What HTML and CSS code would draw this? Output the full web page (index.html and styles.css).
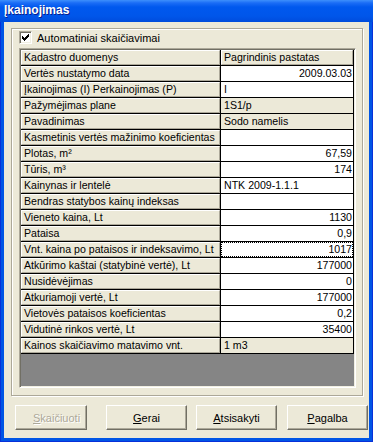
FILE: index.html
```html
<!DOCTYPE html>
<html lang="lt">
<head>
    <meta charset="UTF-8">
    <meta name="viewport" content="width=device-width, initial-scale=1.0">
    <title>Įkainojimas</title>
    <link rel="stylesheet" href="styles.css">
</head>
<body>
    <div class="window">
        <div class="titlebar">Įkainojimas</div>
        <div class="client">
            <div class="group">
                <div class="check">
                    <span class="check-box">
                        <svg width="7" height="7" viewBox="0 0 7 7"><path d="M0 2h1v1h1v1h1V3h1V2h1V1h1V0h1v3H6v1H5v1H4v1H3v1H2V6H1V5H0z" fill="#000"/></svg>
                    </span>
                    <span>Automatiniai skaičiavimai</span>
                </div>
                <div class="grid">
                    <div class="rows">
                        <div class="cell fixed">Kadastro duomenys</div>
                        <div class="cell fixed">Pagrindinis pastatas</div>

                        <div class="cell fixed">Vertės nustatymo data</div>
                        <div class="cell value num">2009.03.03</div>

                        <div class="cell fixed">Įkainojimas (I) Perkainojimas (P)</div>
                        <div class="cell value">I</div>

                        <div class="cell fixed">Pažymėjimas plane</div>
                        <div class="cell value ro">1S1/p</div>

                        <div class="cell fixed">Pavadinimas</div>
                        <div class="cell value ro">Sodo namelis</div>

                        <div class="cell fixed">Kasmetinis vertės mažinimo koeficientas</div>
                        <div class="cell value"></div>

                        <div class="cell fixed">Plotas, m²</div>
                        <div class="cell value num">67,59</div>

                        <div class="cell fixed">Tūris, m³</div>
                        <div class="cell value num">174</div>

                        <div class="cell fixed">Kainynas ir lentelė</div>
                        <div class="cell value">NTK 2009-1.1.1</div>

                        <div class="cell fixed">Bendras statybos kainų indeksas</div>
                        <div class="cell value"></div>

                        <div class="cell fixed">Vieneto kaina, Lt</div>
                        <div class="cell value num">1130</div>

                        <div class="cell fixed">Pataisa</div>
                        <div class="cell value num">0,9</div>

                        <div class="cell fixed">Vnt. kaina po pataisos ir indeksavimo, Lt</div>
                        <div class="cell value num focus">1017</div>

                        <div class="cell fixed">Atkūrimo kaštai (statybinė vertė), Lt</div>
                        <div class="cell value num">177000</div>

                        <div class="cell fixed">Nusidėvėjimas</div>
                        <div class="cell value num">0</div>

                        <div class="cell fixed">Atkuriamoji vertė, Lt</div>
                        <div class="cell value num">177000</div>

                        <div class="cell fixed">Vietovės pataisos koeficientas</div>
                        <div class="cell value num">0,2</div>

                        <div class="cell fixed">Vidutinė rinkos vertė, Lt</div>
                        <div class="cell value num">35400</div>

                        <div class="cell fixed">Kainos skaičiavimo matavimo vnt.</div>
                        <div class="cell value ro">1 m3</div>
                    </div>
                </div>
            </div>
            <div class="buttons">
                <button class="btn btn-calc" disabled><u>S</u>kaičiuoti</button>
                <button class="btn btn-ok"><u>G</u>erai</button>
                <button class="btn"><u>A</u>tsisakyti</button>
                <button class="btn btn-help"><u>P</u>agalba</button>
            </div>
        </div>
    </div>
</body>
</html>
```

FILE: styles.css
```css
* {
    margin: 0;
    padding: 0;
    box-sizing: border-box;
}
body {
    background: #fff;
    font-family: "Liberation Sans", Arial, sans-serif;
    font-size: 10.6px;
    color: #000;
}
.window {
    width: 373px;
    height: 442px;
    display: flex;
    flex-direction: column;
    padding: 0 4px 4px;
    background: #0055e5;
    box-shadow: inset 1px 0 #0831d9, inset -1px 0 #0831d9, inset 0 -1px #0831d9;
}
.titlebar {
    height: 22px;
    margin: 0 -4px;
    padding-left: 4px;
    line-height: 21px;
    font-size: 12px;
    font-weight: bold;
    color: #fff;
    text-shadow: 1px 1px #0a1e8c;
    background: linear-gradient(#3d8ffc 0, #1a6cf6 3px, #0058ee 7px, #0056ea 16px, #004cdc 22px);
}
.client {
    flex: 1;
    background: #ece9d8;
    padding: 6px 0 0 7px;
}
/* group frame */
.group {
    width: 352px;
    height: 368px;
    border: 1px solid #aca899;
    box-shadow: inset 1px 1px #fff, 1px 1px #fff;
    padding: 2px 0 0 7px;
}
.check {
    display: flex;
    align-items: center;
    height: 13px;
    margin-bottom: 4px;
    font-size: 11px;
}
.check-box {
    width: 13px;
    height: 13px;
    margin-right: 5px;
    background: #fff;
    border-top: 1px solid #aca899;
    border-left: 1px solid #aca899;
    border-right: 1px solid #fff;
    border-bottom: 1px solid #fff;
    box-shadow: inset 1px 1px #716f64, inset -1px -1px #f1efe2;
    display: flex;
    align-items: center;
    justify-content: center;
}
/* string grid */
.grid {
    width: 337px;
    height: 340px;
    background: #858585;
    border-top: 1px solid #aca899;
    border-left: 1px solid #aca899;
    border-right: 1px solid #fff;
    border-bottom: 1px solid #fff;
    box-shadow: inset 1px 1px #716f64, inset -1px -1px #f1efe2;
    padding: 1px;
}
.rows {
    display: grid;
    grid-template-columns: 199px 132px;
    grid-auto-rows: 15px;
    gap: 1px;
    padding: 0 1px 1px 0;
    width: 333px;
    background: #000;
}
.cell {
    white-space: nowrap;
    overflow: hidden;
    line-height: 15px;
    padding: 0 2px 0 3px;
}
.fixed {
    background: #ece9d8;
    border-top: 1px solid #fff;
    border-left: 1px solid #fff;
    border-right: 1px solid #aca899;
    border-bottom: 1px solid #aca899;
    padding-left: 2px;
    line-height: 13px;
}
.value {
    background: #fff;
}
.value.ro {
    background: #ece9d8;
}
.num {
    text-align: right;
    padding-right: 1px;
}
.focus {
    border: 1px dotted #000;
    line-height: 13px;
    padding-right: 0;
}
/* buttons */
.buttons {
    display: flex;
    margin-top: 9px;
    padding-left: 4px;
}
.btn {
    width: 81px;
    height: 25px;
    font-family: inherit;
    font-size: 11px;
    color: #000;
    background: #ece9d8;
    border-top: 1px solid #fff;
    border-left: 1px solid #fff;
    border-right: 1px solid #716f64;
    border-bottom: 1px solid #716f64;
    box-shadow: inset -1px -1px #aca899;
}
.btn-calc {
    width: 72px;
    text-align: left;
    padding-left: 17px;
    color: #aca899;
    text-shadow: 1px 1px #fff;
}
.btn + .btn {
    margin-left: 9px;
}
.btn-ok.btn {
    margin-left: 19px;
}
.btn-help.btn {
    margin-left: 10px;
}
```
